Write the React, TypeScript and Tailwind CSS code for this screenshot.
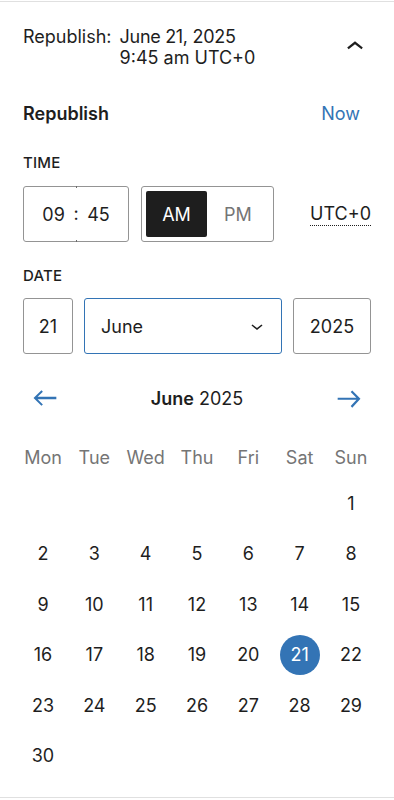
import React from 'react'

const WEEKDAYS = ['Mon', 'Tue', 'Wed', 'Thu', 'Fri', 'Sat', 'Sun']
const DAYS = Array.from({ length: 30 }, (_, i) => i + 1)
const SELECTED = 21

function ChevronUp() {
  return (
    <svg viewBox="0 0 24 24" className="w-[34px] h-[34px]" fill="#1e1e1e">
      <path d="M6.5 12.4L12 8l5.5 4.4-.9 1.2L12 10l-4.5 3.6-1-1.2z" />
    </svg>
  )
}

function ChevronDown() {
  return (
    <svg viewBox="0 0 24 24" className="w-6 h-6" fill="#1e1e1e">
      <path d="M17.5 11.6L12 16l-5.5-4.4.9-1.2L12 14l4.5-3.6 1 1.2z" />
    </svg>
  )
}

function ArrowLeft() {
  return (
    <svg viewBox="0 0 24 24" className="w-[34px] h-[34px]" fill="#3374b5">
      <path d="M20 11.2H6.8l3.7-3.7-1-1L3.9 12l5.6 5.5 1-1-3.7-3.7H20z" />
    </svg>
  )
}

function ArrowRight() {
  return (
    <svg viewBox="0 0 24 24" className="w-[34px] h-[34px]" fill="#3374b5">
      <path d="M14.3 6.7l-1.1 1.1 4 4H4v1.5h13.3l-4.1 4.4 1.1 1.1 5.8-6.3z" />
    </svg>
  )
}

function Label({ children }: { children: React.ReactNode }) {
  return <div className="text-[15px] leading-4 font-medium uppercase tracking-[0.2px]">{children}</div>
}

export default function App() {
  return (
    <div className="min-h-screen bg-white font-['Inter',sans-serif] text-[#1e1e1e]">
      <div className="mt-px border-t border-b border-[#e0e0e0] px-[23px] pt-6 pb-[21px]">
        {/* summary header */}
        <div className="flex items-center justify-between">
          <div className="flex gap-[8px] text-[18px] leading-[21px]">
            <span>Republish:</span>
            <div>
              <div className="tracking-[-0.3px]">June 21, 2025</div>
              <div>9:45 am UTC+0</div>
            </div>
          </div>
          <button className="-mr-px">
            <ChevronUp />
          </button>
        </div>

        <div className="mt-[34px] flex items-center justify-between text-[18px] leading-6">
          <span className="font-semibold">Republish</span>
          <button className="mr-[11px] text-[#3374b5]">Now</button>
        </div>

        {/* time */}
        <div className="mt-[29px]">
          <Label>Time</Label>
        </div>
        <div className="mt-[15px] flex items-center text-[18px]">
          <div className="w-[106px] h-14 border border-[#949494] rounded-[3px] flex items-center px-3">
            <span className="w-9 text-center">09</span>
            <div className="w-[10px] self-stretch -my-px flex flex-col items-center">
              <span className="w-px h-[2px] bg-[#6b6b6b]" />
              <span className="flex-1 flex items-center pb-[2px]">:</span>
              <span className="w-px h-[2px] bg-[#6b6b6b]" />
            </div>
            <span className="w-9 text-center">45</span>
          </div>
          <div className="ml-3 w-[133px] h-14 border border-[#949494] rounded-[3px] p-1 flex">
            <button className="w-[61px] rounded-[2px] bg-[#1e1e1e] text-white">AM</button>
            <button className="flex-1 text-[#757575]">PM</button>
          </div>
          <span className="ml-auto leading-[22px] border-b border-dotted border-[#1e1e1e]">UTC+0</span>
        </div>

        {/* date */}
        <div className="mt-[26px]">
          <Label>Date</Label>
        </div>
        <div className="mt-[14px] flex gap-[11px] text-[18px]">
          <div className="w-[50px] h-14 border border-[#949494] rounded-[3px] flex items-center justify-center">21</div>
          <div className="flex-1 h-14 border-[1.5px] border-[#3374b5] rounded-[3px] flex items-center justify-between pl-[16px] pr-3">
            <span>June</span>
            <ChevronDown />
          </div>
          <div className="w-[78px] h-14 border border-[#949494] rounded-[3px] flex items-center justify-center">2025</div>
        </div>

        {/* calendar */}
        <div className="mt-[27px] flex items-center justify-between px-[5px] text-[18px]">
          <button><ArrowLeft /></button>
          <div>
            <span className="font-semibold">June</span> 2025
          </div>
          <button><ArrowRight /></button>
        </div>

        <div className="mt-[31px] grid grid-cols-[repeat(7,40px)] justify-between text-[18px] leading-6 text-[#757575]">
          {WEEKDAYS.map((d) => (
            <div key={d} className="text-center">{d}</div>
          ))}
        </div>

        <div className="mt-[13px] grid grid-cols-[repeat(7,40px)] justify-between gap-y-[10.6px] text-[18px]">
          {DAYS.map((d) => (
            <button
              key={d}
              className={`h-10 w-10 rounded-full flex items-center justify-center ${d === 1 ? 'col-start-7' : ''} ${
                d === SELECTED ? 'bg-[#3374b5] text-white' : ''
              }`}
            >
              {d}
            </button>
          ))}
        </div>
      </div>
    </div>
  )
}
